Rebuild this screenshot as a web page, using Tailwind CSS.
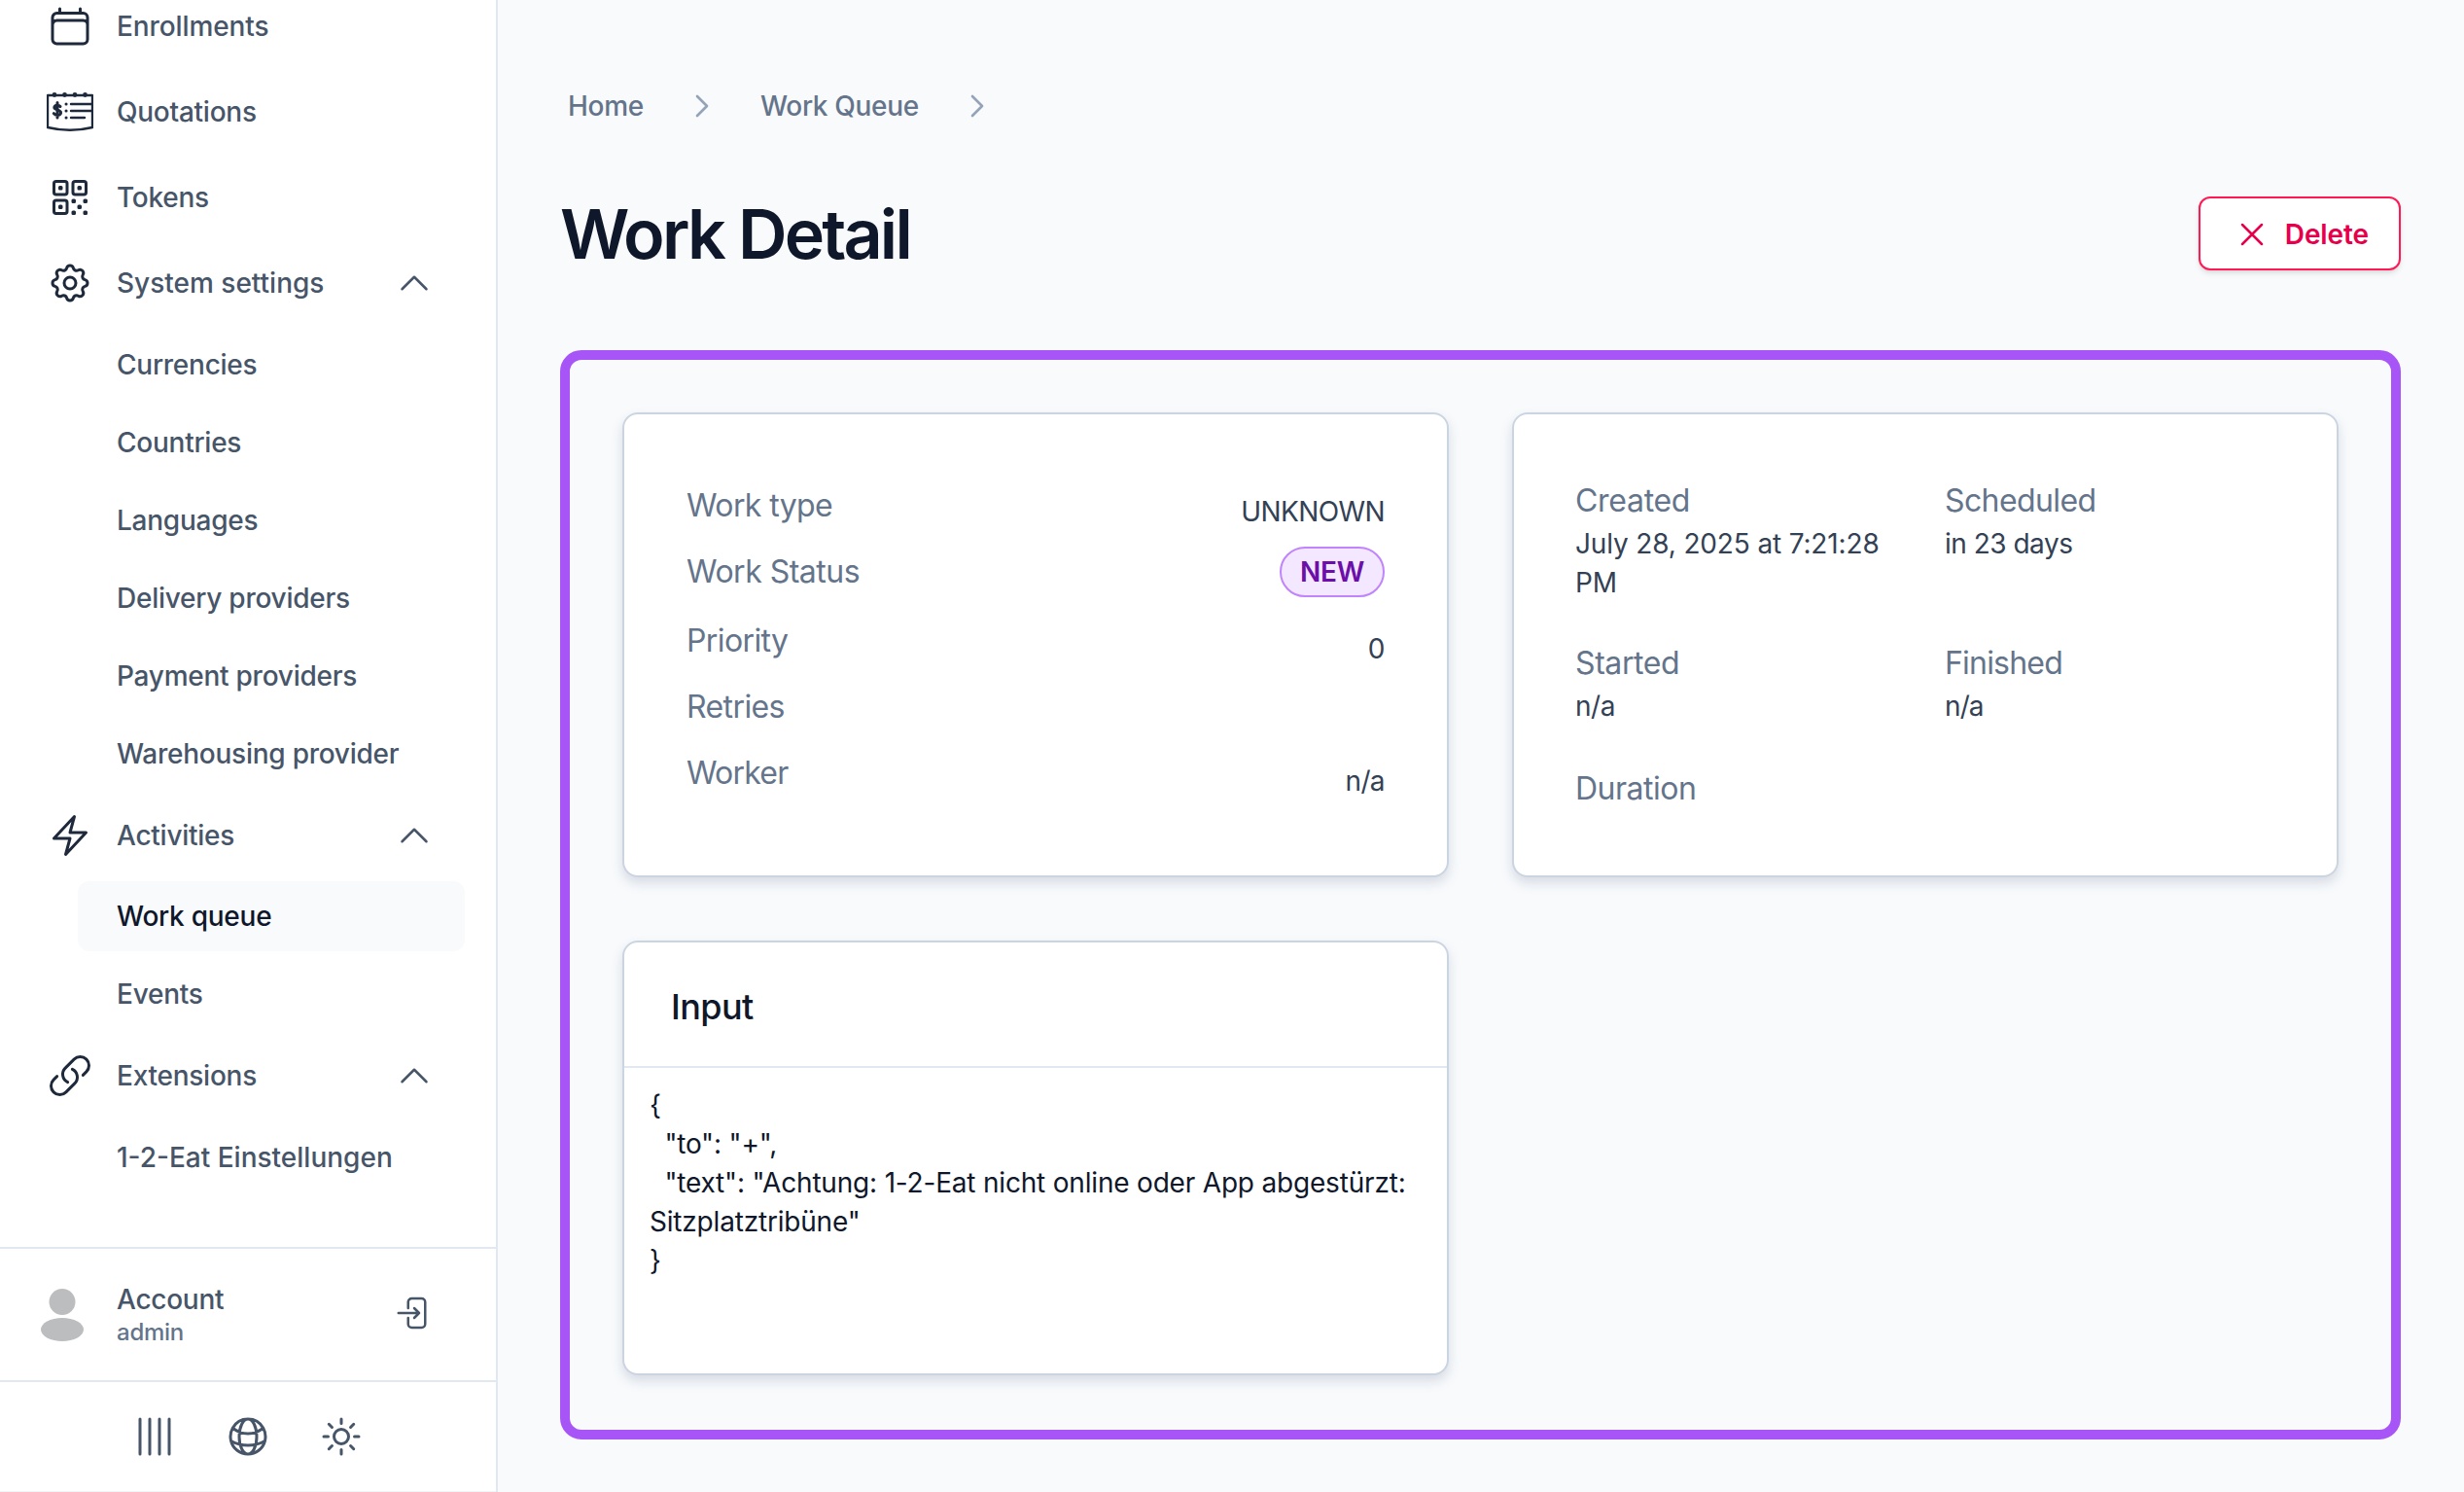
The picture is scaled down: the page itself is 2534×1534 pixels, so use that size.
<!DOCTYPE html>
<html lang="en">
<head>
<meta charset="utf-8">
<title>Work Detail</title>
<script src="https://cdn.jsdelivr.net/npm/@tailwindcss/browser@4"></script>
</head>
<body class="font-[Inter,sans-serif] bg-[#f8fafc]">
<div class="flex h-[1534px] w-[2534px] overflow-hidden">
  <aside class="flex h-full w-[512px] shrink-0 flex-col border-r-2 border-[#e2e8f0] bg-white text-[28px] font-medium tracking-[-0.25px] text-[#475569]">
    <nav class="-mt-[17px] flex h-[1299px] shrink-0 flex-col">
      <div class="flex h-[88px] shrink-0 items-center pl-[48px]"><svg class="h-12 w-12 shrink-0 text-[#1e293b]" fill="none" viewBox="0 0 24 24" stroke="currentColor" stroke-width="1.5" stroke-linecap="round" stroke-linejoin="round"><path d="M6.75 3v2.25M17.25 3v2.25M3 18.75V7.5a2.25 2.25 0 0 1 2.25-2.25h13.5A2.25 2.25 0 0 1 21 7.5v11.25m-18 0A2.25 2.25 0 0 0 5.25 21h13.5A2.25 2.25 0 0 0 21 18.75m-18 0v-7.5A2.25 2.25 0 0 1 5.25 9h13.5A2.25 2.25 0 0 1 21 11.25v7.5"/></svg><span class="ml-6 tracking-[-0.1px]">Enrollments</span></div>
      <div class="flex h-[88px] shrink-0 items-center pl-[48px]"><svg class="h-12 w-12 shrink-0 text-[#1e293b]" fill="none" viewBox="0 0 48 48" stroke="currentColor" stroke-width="2.6" stroke-linecap="round" stroke-linejoin="round"><path d="M1 7h46v33c-14 3.4-32 3.4-46 0z" stroke-width="2.4"/><circle cx="8" cy="6.5" r="2.400" fill="currentColor" stroke="none"/><circle cx="18.500" cy="6.500" r="2.400" fill="currentColor" stroke="none"/><circle cx="29" cy="6.500" r="2.400" fill="currentColor" stroke="none"/><circle cx="39.500" cy="6.500" r="2.400" fill="currentColor" stroke="none"/><path d="M14 18.500c-1-1.200-2.500-1.500-4-1.200-1.800.4-2.500 1.700-2 3 .6 1.500 6 1.800 6.500 4 .4 1.700-1 3-3 3.100-1.800.1-3.200-.4-4.200-1.700M11 14.500v15.500" stroke-width="3"/><path d="M25 16h21M25 23h21M25 30h14" stroke-width="2.400"/><path d="M20 16h.1M20 23h.1M20 30h.1" stroke-width="3"/></svg><span class="ml-6">Quotations</span></div>
      <div class="flex h-[88px] shrink-0 items-center pl-[48px]"><svg class="h-12 w-12 shrink-0 text-[#1e293b]" fill="none" viewBox="0 0 24 24" stroke="currentColor" stroke-width="1.5" stroke-linecap="round" stroke-linejoin="round"><path d="M3.750 4.875c0-.621.504-1.125 1.125-1.125h4.500c.621 0 1.125.504 1.125 1.125v4.500c0 .621-.504 1.125-1.125 1.125h-4.500A1.125 1.125 0 0 1 3.750 9.375v-4.500ZM3.750 14.625c0-.621.504-1.125 1.125-1.125h4.500c.621 0 1.125.504 1.125 1.125v4.500c0 .621-.504 1.125-1.125 1.125h-4.500a1.125 1.125 0 0 1-1.125-1.125v-4.500ZM13.500 4.875c0-.621.504-1.125 1.125-1.125h4.500c.621 0 1.125.504 1.125 1.125v4.500c0 .621-.504 1.125-1.125 1.125h-4.500A1.125 1.125 0 0 1 13.500 9.375v-4.500Z"/><path d="M6.750 6.750h.75v.75h-.75v-.75ZM6.750 16.500h.75v.75h-.75v-.75ZM16.500 6.750h.75v.75h-.75v-.75ZM13.500 13.500h.75v.75h-.75v-.75ZM13.500 19.500h.75v.75h-.75v-.75ZM19.500 13.500h.75v.75h-.75v-.75ZM19.500 19.500h.75v.75h-.75v-.75ZM16.500 16.500h.75v.75h-.75v-.75Z"/></svg><span class="ml-6">Tokens</span></div>
      <div class="flex h-[88px] shrink-0 items-center pl-[48px] pr-[64px]"><svg class="h-12 w-12 shrink-0 text-[#1e293b]" fill="none" viewBox="0 0 24 24" stroke="currentColor" stroke-width="1.5" stroke-linecap="round" stroke-linejoin="round"><path d="M10.325 4.317c.426-1.756 2.924-1.756 3.350 0a1.724 1.724 0 0 0 2.573 1.066c1.543-.94 3.310.826 2.370 2.370a1.724 1.724 0 0 0 1.065 2.572c1.756.426 1.756 2.924 0 3.350a1.724 1.724 0 0 0-1.066 2.573c.94 1.543-.826 3.310-2.370 2.370a1.724 1.724 0 0 0-2.572 1.065c-.426 1.756-2.924 1.756-3.350 0a1.724 1.724 0 0 0-2.573-1.066c-1.543.94-3.310-.826-2.370-2.370a1.724 1.724 0 0 0-1.065-2.572c-1.756-.426-1.756-2.924 0-3.350a1.724 1.724 0 0 0 1.066-2.573c-.94-1.543.826-3.310 2.370-2.370.996.608 2.296.07 2.572-1.065z"/><path d="M15 12a3 3 0 1 1-6 0 3 3 0 0 1 6 0Z"/></svg><span class="ml-6 flex-1 tracking-normal">System settings</span><svg class="h-10 w-10 shrink-0" fill="none" viewBox="0 0 24 24" stroke="currentColor" stroke-width="1.5" stroke-linecap="round" stroke-linejoin="round"><path d="m4.500 15.750 7.500-7.500 7.500 7.500"/></svg></div>
      <div class="flex h-[80px] shrink-0 items-center pl-[120px]">Currencies</div>
      <div class="flex h-[80px] shrink-0 items-center pl-[120px]">Countries</div>
      <div class="flex h-[80px] shrink-0 items-center pl-[120px]">Languages</div>
      <div class="flex h-[80px] shrink-0 items-center pl-[120px]">Delivery providers</div>
      <div class="flex h-[80px] shrink-0 items-center pl-[120px]">Payment providers</div>
      <div class="flex h-[80px] shrink-0 items-center pl-[120px]">Warehousing provider</div>
      <div class="flex h-[87px] shrink-0 items-center pl-[48px] pr-[64px]"><svg class="h-12 w-12 shrink-0 text-[#1e293b]" fill="none" viewBox="0 0 24 24" stroke="currentColor" stroke-width="1.5" stroke-linecap="round" stroke-linejoin="round"><path d="m3.750 13.500 10.500-11.250L12 10.500h8.250L9.750 21.750 12 13.500H3.750Z"/></svg><span class="ml-6 flex-1">Activities</span><svg class="h-10 w-10 shrink-0" fill="none" viewBox="0 0 24 24" stroke="currentColor" stroke-width="1.5" stroke-linecap="round" stroke-linejoin="round"><path d="m4.500 15.750 7.500-7.500 7.500 7.500"/></svg></div>
      <div class="flex h-[80px] shrink-0 items-center pl-[80px] pr-[32px]"><div class="flex h-[72px] w-full items-center rounded-xl bg-[#f8fafc] pl-[40px] text-[#0f172a]">Work queue</div></div>
      <div class="flex h-[80px] shrink-0 items-center pl-[120px]">Events</div>
      <div class="flex h-[88px] shrink-0 items-center pl-[48px] pr-[64px]"><svg class="h-12 w-12 shrink-0 text-[#1e293b]" fill="none" viewBox="0 0 24 24" stroke="currentColor" stroke-width="1.5" stroke-linecap="round" stroke-linejoin="round"><path d="M13.190 8.688a4.500 4.500 0 0 1 1.242 7.244l-4.500 4.500a4.500 4.500 0 0 1-6.364-6.364l1.757-1.757m13.350-.622 1.757-1.757a4.500 4.500 0 0 0-6.364-6.364l-4.500 4.500a4.500 4.500 0 0 0 1.242 7.244"/></svg><span class="ml-6 flex-1">Extensions</span><svg class="h-10 w-10 shrink-0" fill="none" viewBox="0 0 24 24" stroke="currentColor" stroke-width="1.5" stroke-linecap="round" stroke-linejoin="round"><path d="m4.500 15.750 7.500-7.500 7.500 7.500"/></svg></div>
      <div class="flex h-[80px] shrink-0 items-center pl-[120px] tracking-normal">1-2-Eat Einstellungen</div>
    </nav>
    <div class="flex h-[137px] shrink-0 items-center border-t-2 border-[#e2e8f0] pl-[41px] pr-[64px]">
      <svg class="h-[54px] w-[46px] shrink-0 text-[#bcbdbf]" viewBox="0 0 46 54" fill="currentColor"><circle cx="23" cy="13.500" r="13.500"/><ellipse cx="23" cy="42" rx="22" ry="12"/></svg>
      <div class="-mt-[2px] ml-[33px] flex-1"><div class="h-[38px] leading-[36px]">Account</div><div class="text-[24px] leading-[28px] font-medium text-[#64748b]">admin</div></div>
      <svg class="-mt-[3px] h-10 w-10 shrink-0" fill="none" viewBox="0 0 24 24" stroke="currentColor" stroke-width="1.5" stroke-linecap="round" stroke-linejoin="round"><path d="M8.250 9V5.250A2.250 2.250 0 0 1 10.500 3h6a2.250 2.250 0 0 1 2.250 2.250v13.500A2.250 2.250 0 0 1 16.500 21h-6a2.250 2.250 0 0 1-2.250-2.250V15M12 9l3 3m0 0-3 3m3-3H2.250"/></svg>
    </div>
    <div class="flex flex-1 items-center justify-center gap-12 border-t-2 border-[#e2e8f0] border-b border-b-[#f1f5f9]">
      <svg class="h-12 w-12" fill="none" viewBox="0 0 24 24" stroke="currentColor" stroke-width="1.5" stroke-linecap="round" stroke-linejoin="round"><path d="M4.500 3v18M9.500 3v18M14.500 3v18M19.500 3v18"/></svg>
      <svg class="h-12 w-12" fill="none" viewBox="0 0 24 24" stroke="currentColor" stroke-width="1.5" stroke-linecap="round" stroke-linejoin="round"><path d="M12 21a9.004 9.004 0 0 0 8.716-6.747M12 21a9.004 9.004 0 0 1-8.716-6.747M12 21c2.485 0 4.500-4.030 4.500-9S14.485 3 12 3m0 18c-2.485 0-4.500-4.030-4.500-9S9.515 3 12 3m0 0a8.997 8.997 0 0 1 7.843 4.582M12 3a8.997 8.997 0 0 0-7.843 4.582m15.686 0A11.953 11.953 0 0 1 12 10.500c-2.998 0-5.740-1.100-7.843-2.918m15.686 0A8.959 8.959 0 0 1 21 12c0 .778-.099 1.533-.284 2.253m0 0A17.919 17.919 0 0 1 12 16.500c-3.162 0-6.133-.815-8.716-2.247m0 0A9.004 9.004 0 0 1 3 12c0-1.605.42-3.113 1.157-4.418"/></svg>
      <svg class="h-12 w-12" fill="none" viewBox="0 0 24 24" stroke="currentColor" stroke-width="1.5" stroke-linecap="round" stroke-linejoin="round"><path d="M12 3v2.250m6.364.386-1.591 1.591M21 12h-2.250m-.386 6.364-1.591-1.591M12 18.750V21m-4.773-4.227-1.591 1.591M5.250 12H3m4.227-4.773L5.636 5.636M15.750 12a3.750 3.750 0 1 1-7.500 0 3.750 3.750 0 0 1 7.500 0Z"/></svg>
    </div>
  </aside>
  <main class="flex min-w-0 flex-1 flex-col pl-[64px] pr-[65px] pt-[88px]">
    <div class="flex h-[40px] items-center gap-[44px] pl-[8px] pt-[1px] text-[28px] font-medium tracking-[-0.3px] text-[#64748b]">
      <span>Home</span>
      <svg class="h-8 w-8 text-[#94a3b8]" fill="none" viewBox="0 0 24 24" stroke="currentColor" stroke-width="2" stroke-linecap="round" stroke-linejoin="round"><path d="m8.250 4.500 7.500 7.500-7.500 7.500"/></svg>
      <span>Work Queue</span>
      <svg class="h-8 w-8 text-[#94a3b8]" fill="none" viewBox="0 0 24 24" stroke="currentColor" stroke-width="2" stroke-linecap="round" stroke-linejoin="round"><path d="m8.250 4.500 7.500 7.500-7.500 7.500"/></svg>
    </div>
    <div class="mt-[74px] flex h-[76px] items-center justify-between">
      <h1 class="pt-[2px] text-[70px] leading-[80px] font-semibold tracking-[-2.8px] text-[#0f172a]">Work Detail</h1>
      <button class="flex h-[76px] items-center gap-[14px] rounded-xl border-2 border-[#ff1a55] bg-white pl-[33px] pr-[31px] pt-[1px] text-[28px] font-semibold tracking-[-0.1px] text-[#e6004c] shadow-md"><svg class="h-10 w-10" fill="none" viewBox="0 0 24 24" stroke="currentColor" stroke-width="1.5" stroke-linecap="round" stroke-linejoin="round"><path d="M6 18 18 6M6 6l12 12"/></svg>Delete</button>
    </div>
    <section class="mt-[82px] grid h-[1120px] grid-cols-2 content-start gap-[65px] rounded-[22px] border-[10px] border-[#a855f7] p-[54px]">
      <div class="h-[478px] rounded-2xl border-2 border-[#cbd5e1] bg-white pl-[64px] pr-[64px] pt-[70px] shadow-[0_6px_12px_rgba(100,116,139,0.22)]">
        <div class="flex h-[68px] justify-between"><span class="text-[32px] leading-[48px] tracking-[-0.6px] text-[#64748b]">Work type</span><span class="mt-[6px] text-[28px] leading-[48px] tracking-[-0.6px] text-[#334155]">UNKNOWN</span></div>
        <div class="flex h-[71px] items-start justify-between"><span class="text-[32px] leading-[48px] tracking-[-0.5px] text-[#64748b]">Work Status</span><span class="-mt-[2px] flex h-[52px] w-[108px] items-center justify-center rounded-full border-2 border-[#c084fc] bg-[#f3e8ff] text-[28px] font-semibold tracking-[-0.3px] text-[#6b0fa8]">NEW</span></div>
        <div class="flex h-[68px] justify-between"><span class="text-[32px] leading-[48px] tracking-[-0.6px] text-[#64748b]">Priority</span><span class="mt-[8px] text-[28px] leading-[48px] tracking-[-0.3px] text-[#334155]">0</span></div>
        <div class="flex h-[68px] justify-between"><span class="text-[32px] leading-[48px] tracking-[-0.6px] text-[#64748b]">Retries</span></div>
        <div class="flex h-[68px] justify-between"><span class="text-[32px] leading-[48px] tracking-[-0.8px] text-[#64748b]">Worker</span><span class="mt-[8px] text-[28px] leading-[48px] tracking-[-0.6px] text-[#334155]">n/a</span></div>
      </div>
      <div class="grid h-[478px] grid-cols-2 content-start gap-x-[41px] gap-y-[39px] rounded-2xl border-2 border-[#cbd5e1] bg-white pl-[63px] pr-[64px] pt-[65px] shadow-[0_6px_12px_rgba(100,116,139,0.22)]">
        <div><div class="text-[32px] leading-[48px] tracking-[-0.3px] text-[#64748b]">Created</div><div class="text-[28px] leading-[40px] tracking-[-0.15px] text-[#334155]">July 28, 2025 at 7:21:28 PM</div></div>
        <div><div class="text-[32px] leading-[48px] tracking-[-0.6px] text-[#64748b]">Scheduled</div><div class="text-[28px] leading-[40px] tracking-[-0.5px] text-[#334155]">in 23 days</div></div>
        <div><div class="text-[32px] leading-[48px] tracking-[-0.4px] text-[#64748b]">Started</div><div class="text-[28px] leading-[40px] tracking-[-0.5px] text-[#334155]">n/a</div></div>
        <div><div class="text-[32px] leading-[48px] tracking-[-0.8px] text-[#64748b]">Finished</div><div class="text-[28px] leading-[40px] tracking-[-0.9px] text-[#334155]">n/a</div></div>
        <div class="mt-[2px]"><div class="text-[32px] leading-[48px] tracking-[-0.5px] text-[#64748b]">Duration</div></div>
      </div>
      <div class="h-[447px] rounded-2xl border-2 border-[#cbd5e1] bg-white shadow-[0_6px_12px_rgba(100,116,139,0.22)]">
        <div class="flex h-[129px] items-center border-b-2 border-[#e2e8f0] pl-[48px] pt-[4px] text-[36px] font-medium tracking-[-0.6px] text-[#0f172a]">Input</div>
        <div class="whitespace-pre-wrap px-[26px] pt-[18px] text-[28px] leading-[40px] tracking-[-0.19px] text-[#0f172a]">{
  "to": "+",
  "text": "Achtung: 1-2-Eat nicht online oder App abgestürzt: Sitzplatztribüne"
}</div>
      </div>
    </section>
  </main>
</div>
</body>
</html>
